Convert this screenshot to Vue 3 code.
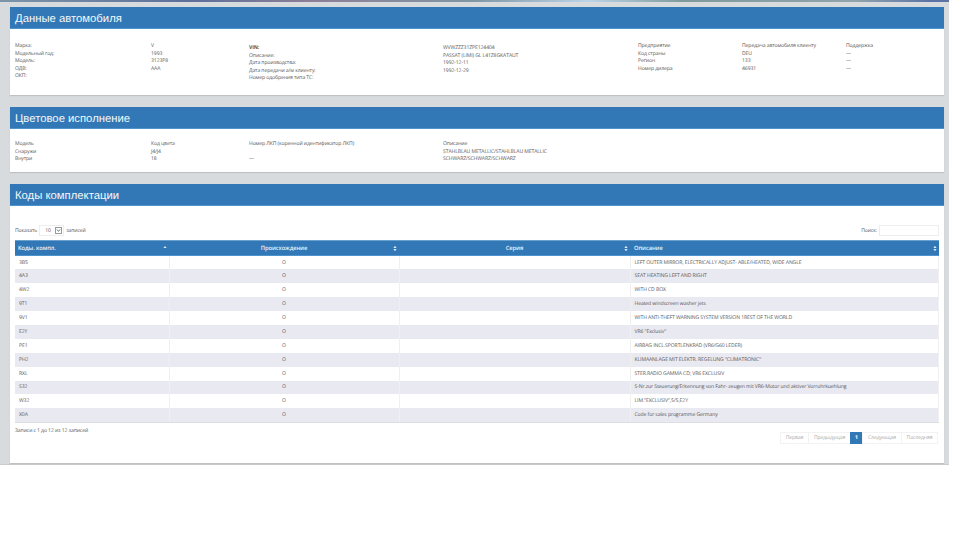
<template>
  <div class="page">
    <div class="strip"></div>

    <section class="panel first">
      <h2>Данные автомобиля</h2>
      <div class="info info-car">
        <div class="block block-a">
          <div v-for="row in carMain" :key="row[0]" class="line">
            <span>{{ row[0] }}</span><span>{{ row[1] }}</span>
          </div>
        </div>
        <div class="block block-b">
          <div v-for="row in carDates" :key="row[0]" class="line">
            <span :class="{ bold: row[0] === 'VIN:' }">{{ row[0] }}</span><span>{{ row[1] }}</span>
          </div>
        </div>
        <div class="block block-c">
          <div v-for="row in carDealer" :key="row[0]" class="line">
            <span>{{ row[0] }}</span><span>{{ row[1] }}</span><span>{{ row[2] }}</span>
          </div>
        </div>
      </div>
    </section>

    <section class="panel second">
      <h2>Цветовое исполнение</h2>
      <div class="info info-color">
        <div v-for="row in colors" :key="row[0]" class="line color-line">
          <span>{{ row[0] }}</span><span>{{ row[1] }}</span><span>{{ row[2] }}</span><span>{{ row[3] }}</span>
        </div>
      </div>
    </section>

    <section class="panel third">
      <h2>Коды комплектации</h2>
      <div class="table-wrap">
        <div class="controls">
          <label class="show">
            Показать
            <span class="select">10<i class="arrow"><svg width="6" height="5" viewBox="0 0 6 5"><path d="M1 1.2 3 3.6 5 1.2" fill="none" stroke="#555" stroke-width="0.9" /></svg></i></span>
            записей
          </label>
          <label class="search">Поиск: <span class="search-box"></span></label>
        </div>

        <table>
          <thead>
            <tr>
              <th v-for="col in columns" :key="col.title" :class="col.cls">
                {{ col.title }}
                <svg class="sort" width="4" height="7" viewBox="0 0 4 7">
                  <path v-if="col.asc" d="M0.4 3 2 1 3.6 3Z" fill="#dfe9f3" />
                  <template v-else>
                    <path d="M0.4 3 2 0.8 3.6 3Z" fill="#dfe9f3" />
                    <path d="M0.4 4 2 6.2 3.6 4Z" fill="#dfe9f3" />
                  </template>
                </svg>
              </th>
            </tr>
          </thead>
          <tbody>
            <tr v-for="row in codes" :key="row[0]">
              <td>{{ row[0] }}</td>
              <td class="center">O</td>
              <td></td>
              <td>{{ row[1] }}</td>
            </tr>
          </tbody>
        </table>

        <div class="bottom">
          <div class="count">Записи с 1 до 12 из 12 записей</div>
          <div class="pager">
            <a class="p1">Первая</a><a class="p2">Предыдущая</a><a class="active">1</a><a class="p3">Следующая</a><a class="p4">Последняя</a>
          </div>
        </div>
      </div>
    </section>
  </div>
</template>

<script setup>
const carMain = [
  ['Марка:', 'V'],
  ['Модельный год:', '1993'],
  ['Модель:', '3123P8'],
  ['ОДВ:', 'AAA'],
  ['ОКП:', ''],
];

const carDates = [
  ['VIN:', 'WVWZZZ31ZPE124404'],
  ['Описание:', 'PASSAT (LIMI) GL L41Z8GKATAUT'],
  ['Дата производства:', '1992-12-11'],
  ['Дата передачи а/м клиенту:', '1992-12-29'],
  ['Номер одобрения типа ТС:', ''],
];

const carDealer = [
  ['Предприятие', 'Передача автомобиля клиенту', 'Поддержка'],
  ['Код страны', 'DEU', '—'],
  ['Регион', '133', '—'],
  ['Номер дилера', '46931', '—'],
];

const colors = [
  ['Модель', 'Код цвета', 'Номер ЛКП (коренной идентификатор ЛКП)', 'Описание'],
  ['Снаружи', 'J4/J4', '', 'STAHLBLAU METALLIC/STAHLBLAU METALLIC'],
  ['Внутри', '18', '—', 'SCHWARZ/SCHWARZ/SCHWARZ'],
];

const columns = [
  { title: 'Коды. компл.', cls: 'left', asc: true },
  { title: 'Происхождение', cls: 'mid' },
  { title: 'Серия', cls: 'mid' },
  { title: 'Описание', cls: 'left' },
];

const codes = [
  ['3B5', 'LEFT OUTER MIRROR, ELECTRICALLY ADJUST- ABLE/HEATED, WIDE ANGLE'],
  ['4A3', 'SEAT HEATING LEFT AND RIGHT'],
  ['4W2', 'WITH CD BOX'],
  ['9T1', 'Heated windscreen washer jets'],
  ['9V1', 'WITH ANTI-THEFT WARNING SYSTEM VERSION 1REST OF THE WORLD'],
  ['E2Y', 'VR6 "Exclusiv"'],
  ['PE1', 'AIRBAG INCL.SPORTLENKRAD (VR6/G60 LEDER)'],
  ['PH2', 'KLIMAANLAGE MIT ELEKTR. REGELUNG "CLIMATRONIC"'],
  ['RXL', 'STER.RADIO GAMMA CD; VR6 EXCLUSIV'],
  ['S32', 'S-Nr.zur Steuerung/Erkennung von Fahr- zeugen mit VR6-Motor und aktiver Vorrohrkuehlung'],
  ['W32', 'LIM."EXCLUSIV",5/5,E2Y'],
  ['X0A', 'Code for sales programme Germany'],
];
</script>

<style>
html,
body {
  margin: 0;
  background: #fff;
}
</style>

<style scoped>
* {
  box-sizing: border-box;
}

.page {
  width: 949px;
  height: 465px;
  background: #d8dbde;
  font-family: 'Open Sans', sans-serif;
  font-size: 5.1px;
  letter-spacing: -0.1px;
  text-rendering: geometricPrecision;
  color: #555;
  padding: 0 5px 0 10px;
  border-bottom: 1px solid #c9cbcd;
}

.strip {
  height: 2px;
  margin: 0 -5px 5px -10px;
  background: linear-gradient(90deg, #7d95a8 0%, #5d6f9a 20%, #8d7f97 33%, #7f97a5 50%, #bcd4e8 62%, #7f9a9d 72%, #90a4ac 90%, #5c73a8 98%);
}

.panel {
  background: #fff;
  box-shadow: 0 1px 1px #bfc2c5;
}

.first {
  height: 88px;
  margin-bottom: 12px;
}

.second {
  height: 65px;
  margin-bottom: 12px;
}

.third {
  height: 279px;
}

h2 {
  margin: 0;
  height: 22px;
  padding-left: 5px;
  background: #3278b6;
  border-bottom: 1px solid #4d94cf;
  color: #f4f8fb;
  font-family: 'Liberation Sans', sans-serif;
  font-size: 11.3px;
  font-weight: 400;
  letter-spacing: 0;
  line-height: 24px;
}

.info {
  display: flex;
  padding-left: 5px;
  line-height: 7.5px;
}

.info-car {
  padding-top: 14px;
}

.block-a {
  width: 234px;
}

.block-b {
  width: 389px;
  padding-top: 2px;
}

.line {
  display: flex;
  height: 7.5px;
  white-space: nowrap;
}

.block-a .line span:first-child {
  width: 136px;
}

.block-b .line span:first-child {
  width: 194px;
}

.block-c .line span:first-child,
.block-c .line span:nth-child(2) {
  width: 104px;
}

.bold {
  font-weight: 700;
}

.info-color {
  display: block;
  padding-top: 12px;
}

.color-line span:nth-child(1) {
  width: 136px;
}

.color-line span:nth-child(2) {
  width: 98px;
}

.color-line span:nth-child(3) {
  width: 194px;
}

.table-wrap {
  padding: 0 5px;
}

.controls {
  display: flex;
  justify-content: space-between;
  align-items: center;
  height: 34px;
  padding-top: 16px;
  padding-bottom: 1px;
}

.show {
  display: flex;
  align-items: center;
  gap: 2px;
}

.select {
  display: flex;
  align-items: center;
  justify-content: space-between;
  width: 25px;
  height: 11px;
  padding: 0 1px 0 5px;
  border: 1px solid #eee;
}

.arrow {
  display: flex;
  align-items: center;
  justify-content: center;
  width: 7px;
  height: 7px;
  border: 1px solid #999;
}

.search {
  display: flex;
  align-items: center;
  gap: 2px;
}

.search-box {
  display: block;
  width: 60px;
  height: 11px;
  border: 1px solid #eee;
}

table {
  width: 924px;
  border-collapse: collapse;
  table-layout: fixed;
}

th {
  position: relative;
  height: 15px;
  padding: 0 4px;
  background: #3278b6;
  border-top: 1px solid #6aa1cf;
  border-bottom: 1px solid #4d94cf;
  color: #eaf1f7;
  font-size: 5.8px;
  font-weight: 600;
}

th.left:first-child {
  padding-left: 3px;
}

th:nth-child(1) {
  width: 154px;
}

th:nth-child(2) {
  width: 230px;
}

th:nth-child(3) {
  width: 231px;
}

th.left {
  text-align: left;
}

th.mid {
  text-align: center;
}

.sort {
  position: absolute;
  right: 2px;
  top: 4px;
}

td {
  height: 13.9px;
  padding: 1px 4px 0;
  border-left: 1px solid #f0f0f3;
  white-space: nowrap;
  line-height: 7px;
}

td:first-child {
  border-left: none;
}

td:last-child {
  border-right: 1px solid #f0f0f3;
}

td.center {
  text-align: center;
}

tbody tr:nth-child(even) td {
  background: #e9e9f2;
}

tbody tr:last-child td {
  border-bottom: 1px solid #dedee2;
}

.bottom {
  display: flex;
  justify-content: space-between;
  align-items: flex-start;
}

.count {
  padding-top: 5px;
}

.pager {
  display: flex;
  margin-top: 9px;
  margin-right: 1px;
}

.pager a {
  display: block;
  height: 12px;
  border: 1px solid #f2f2f2;
  margin-left: -1px;
  color: #aaa;
  line-height: 10px;
  text-align: center;
}

.pager .p1 {
  width: 29px;
}

.pager .p2 {
  width: 43px;
}

.pager .p3 {
  width: 40px;
}

.pager .p4 {
  width: 37px;
}

.pager a.active {
  width: 13px;
  background: #3278b6;
  border-color: #3278b6;
  color: #fff;
  font-weight: 700;
}
</style>
